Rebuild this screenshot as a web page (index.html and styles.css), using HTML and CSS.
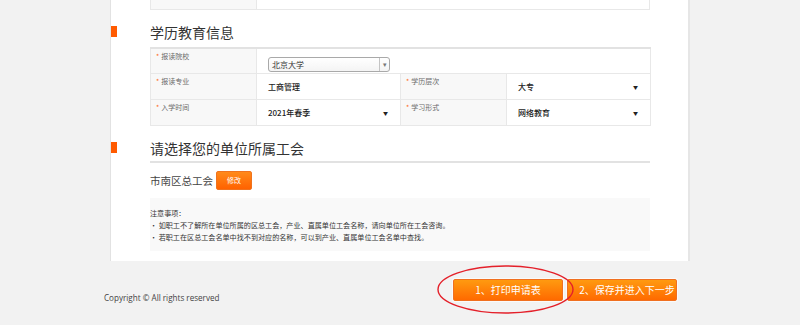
FILE: index.html
```html
<!DOCTYPE html>
<html lang="zh-CN">
<head>
<meta charset="utf-8">
<link rel="stylesheet" href="styles.css">
</head>
<body>
<div class="panel">
  <table class="tbl tbl-top">
    <colgroup><col class="c-lab"><col></colgroup>
    <tr><td class="lab"></td><td class="val val-top">汉</td></tr>
  </table>

  <div class="sec-head sec-head-1">
    <span class="marker"></span>
    <h2 class="sec-title">学历教育信息</h2>
  </div>

  <table class="tbl tbl-edu">
    <colgroup><col class="c-lab"><col class="c-val"><col class="c-lab"><col class="c-val"></colgroup>
    <tr class="r1">
      <td class="lab"><span class="req">*</span>报读院校</td>
      <td class="val" colspan="3">
        <div class="combo"><span class="combo-text">北京大学</span><span class="combo-btn">▾</span></div>
      </td>
    </tr>
    <tr>
      <td class="lab"><span class="req">*</span>报读专业</td>
      <td class="val"><div class="vtext">工商管理</div></td>
      <td class="lab"><span class="req">*</span>学历层次</td>
      <td class="val"><div class="vsel"><span>大专</span><span class="arr">▼</span></div></td>
    </tr>
    <tr>
      <td class="lab"><span class="req">*</span>入学时间</td>
      <td class="val"><div class="vsel"><span>2021年春季</span><span class="arr">▼</span></div></td>
      <td class="lab"><span class="req">*</span>学习形式</td>
      <td class="val"><div class="vsel"><span>网络教育</span><span class="arr">▼</span></div></td>
    </tr>
  </table>

  <div class="sec-head sec-head-2">
    <span class="marker"></span>
    <h2 class="sec-title sec-title-line">请选择您的单位所属工会</h2>
  </div>

  <div class="union">
    <span class="union-name">市南区总工会</span>
    <span class="btn-small">修改</span>
  </div>

  <div class="notes">
    <p>注意事项：</p>
    <p>• 如职工不了解所在单位所属的区总工会，产业、直属单位工会名称，请向单位所在工会咨询。</p>
    <p>• 若职工在区总工会名单中找不到对应的名称，可以到产业、直属单位工会名单中查找。</p>
  </div>
</div>

<div class="footer">
  <div class="copy">Copyright © All rights reserved</div>
  <div class="actions">
    <div class="btn-wrap">
      <span class="btn">1、打印申请表</span>
      <svg class="ring" viewBox="0 0 137 49" width="137" height="49"><ellipse cx="68.5" cy="24.5" rx="67.5" ry="23.5" fill="none" stroke="#e4202a" stroke-width="1.4"/></svg>
    </div>
    <span class="btn btn-2">2、保存并进入下一步</span>
  </div>
</div>
</body>
</html>
```

FILE: styles.css
```css
* { box-sizing: border-box; }
html, body { margin: 0; padding: 0; }
body {
  background: #f2f2f2;
  width: 800px;
  height: 325px;
  overflow: hidden;
  font-family: "Noto Sans CJK SC", "Noto Sans", sans-serif;
  color: #333;
}

.panel {
  margin: -20px 0 0 110px;
  width: 580px;
  background: #fff;
  border-left: 1px solid #e2e2e2;
  border-right: 2px solid #e6e6e6;
  padding-bottom: 10px;
}

.tbl {
  margin-left: 39px;
  width: 500px;
  border-collapse: collapse;
  table-layout: fixed;
}
.tbl td {
  border: 1px solid #e8e8e8;
  padding: 0;
}
.c-lab { width: 106px; }
.c-val { width: 144px; }

.tbl-top td { height: 29px; border-top: none; }
.val-top {
  font-size: 8px;
  line-height: 8px;
  vertical-align: bottom;
  padding: 0 0 5px 6px !important;
  color: #555;
}

.lab {
  background: #f8f8f8;
  vertical-align: top;
  font-size: 7px;
  line-height: 9px;
  color: #6a6a6a;
  padding: 3px 0 0 5px !important;
}
.req {
  color: #ff6a1a;
  font-size: 7px;
  margin-right: 2px;
}
.val {
  vertical-align: middle;
  padding: 0 12px 0 11px !important;
  font-size: 8px;
  color: #222;
}

.tbl-edu { border-top: 2px solid #e2e2e2; }
.tbl-edu tr td { height: 26px; }
.tbl-edu tr.r1 .val { vertical-align: top; padding-top: 8px !important; }

.combo {
  width: 122px;
  height: 15px;
  border: 1px solid #a9a9a9;
  border-radius: 3px;
  display: flex;
  align-items: stretch;
  background: linear-gradient(#ffffff, #f4f4f4);
}
.combo-text {
  flex: 1;
  font-size: 8px;
  line-height: 13px;
  padding-left: 3px;
  color: #333;
}
.combo-btn {
  width: 10px;
  border-left: 1px solid #c4c4c4;
  font-size: 7px;
  line-height: 13px;
  text-align: center;
  color: #777;
}

.vtext { font-weight: 500; line-height: 10px; padding-top: 1px; }
.vsel {
  display: flex;
  justify-content: space-between;
  align-items: center;
  line-height: 10px;
  font-weight: 500;
}
.arr { font-size: 5px; color: #222; }

.sec-head {
  display: flex;
  align-items: flex-start;
}
.sec-head-1 { margin-top: 15px; }
.sec-head-2 { margin-top: 15px; }
.marker {
  width: 6px;
  height: 11px;
  background: #ff5a00;
  margin-right: 33px;
  flex: none;
}
.marker { margin-top: 1px; }
.sec-title {
  margin: 0;
  font-size: 14px;
  line-height: 14px;
  font-weight: 400;
  color: #333;
}
.sec-head-1 + .tbl { margin-top: 8px; }
.sec-title-line {
  width: 500px;
  padding-bottom: 6px;
  border-bottom: 2px solid #e2e2e2;
}

.union {
  margin: 8px 0 0 39px;
  display: flex;
  align-items: center;
  height: 19px;
}
.union-name {
  font-size: 10.5px;
  color: #444;
  margin-right: 3px;
}
.btn-small {
  width: 36px;
  height: 19px;
  border-radius: 2px;
  background: linear-gradient(#ff8a1a, #ff6200);
  border: 1px solid #f0731e;
  color: #fff;
  font-size: 7px;
  line-height: 17px;
  text-align: center;
}

.notes {
  margin: 8px 0 0 39px;
  width: 500px;
  background: #f9f9f9;
  padding: 9px 0 8px 0;
}
.notes p {
  margin: 0;
  font-size: 7.1px;
  line-height: 12px;
  color: #333;
}

.footer {
  display: flex;
  margin-top: 18px;
  padding-left: 104px;
  padding-right: 123px;
}
.copy {
  font-family: "Open Sans", "Noto Sans", sans-serif;
  font-size: 8.1px;
  line-height: 12px;
  color: #444;
  margin-top: 13px;
}
.actions {
  margin-left: auto;
  display: flex;
  gap: 4px;
}
.btn-wrap { position: relative; }
.btn {
  display: block;
  width: 110px;
  height: 22px;
  border: 1px solid #f07020;
  border-radius: 2px;
  background: linear-gradient(#ff9a10, #ff6a00);
  color: #fff;
  font-size: 10px;
  line-height: 20px;
  text-align: center;
  white-space: nowrap;
  overflow: hidden;
  box-shadow: 0 0 0 1px rgba(255,255,255,0.6);
}
.btn-2 { padding-left: 10px; }
.ring {
  position: absolute;
  left: -16px;
  top: -14px;
  pointer-events: none;
}
```
